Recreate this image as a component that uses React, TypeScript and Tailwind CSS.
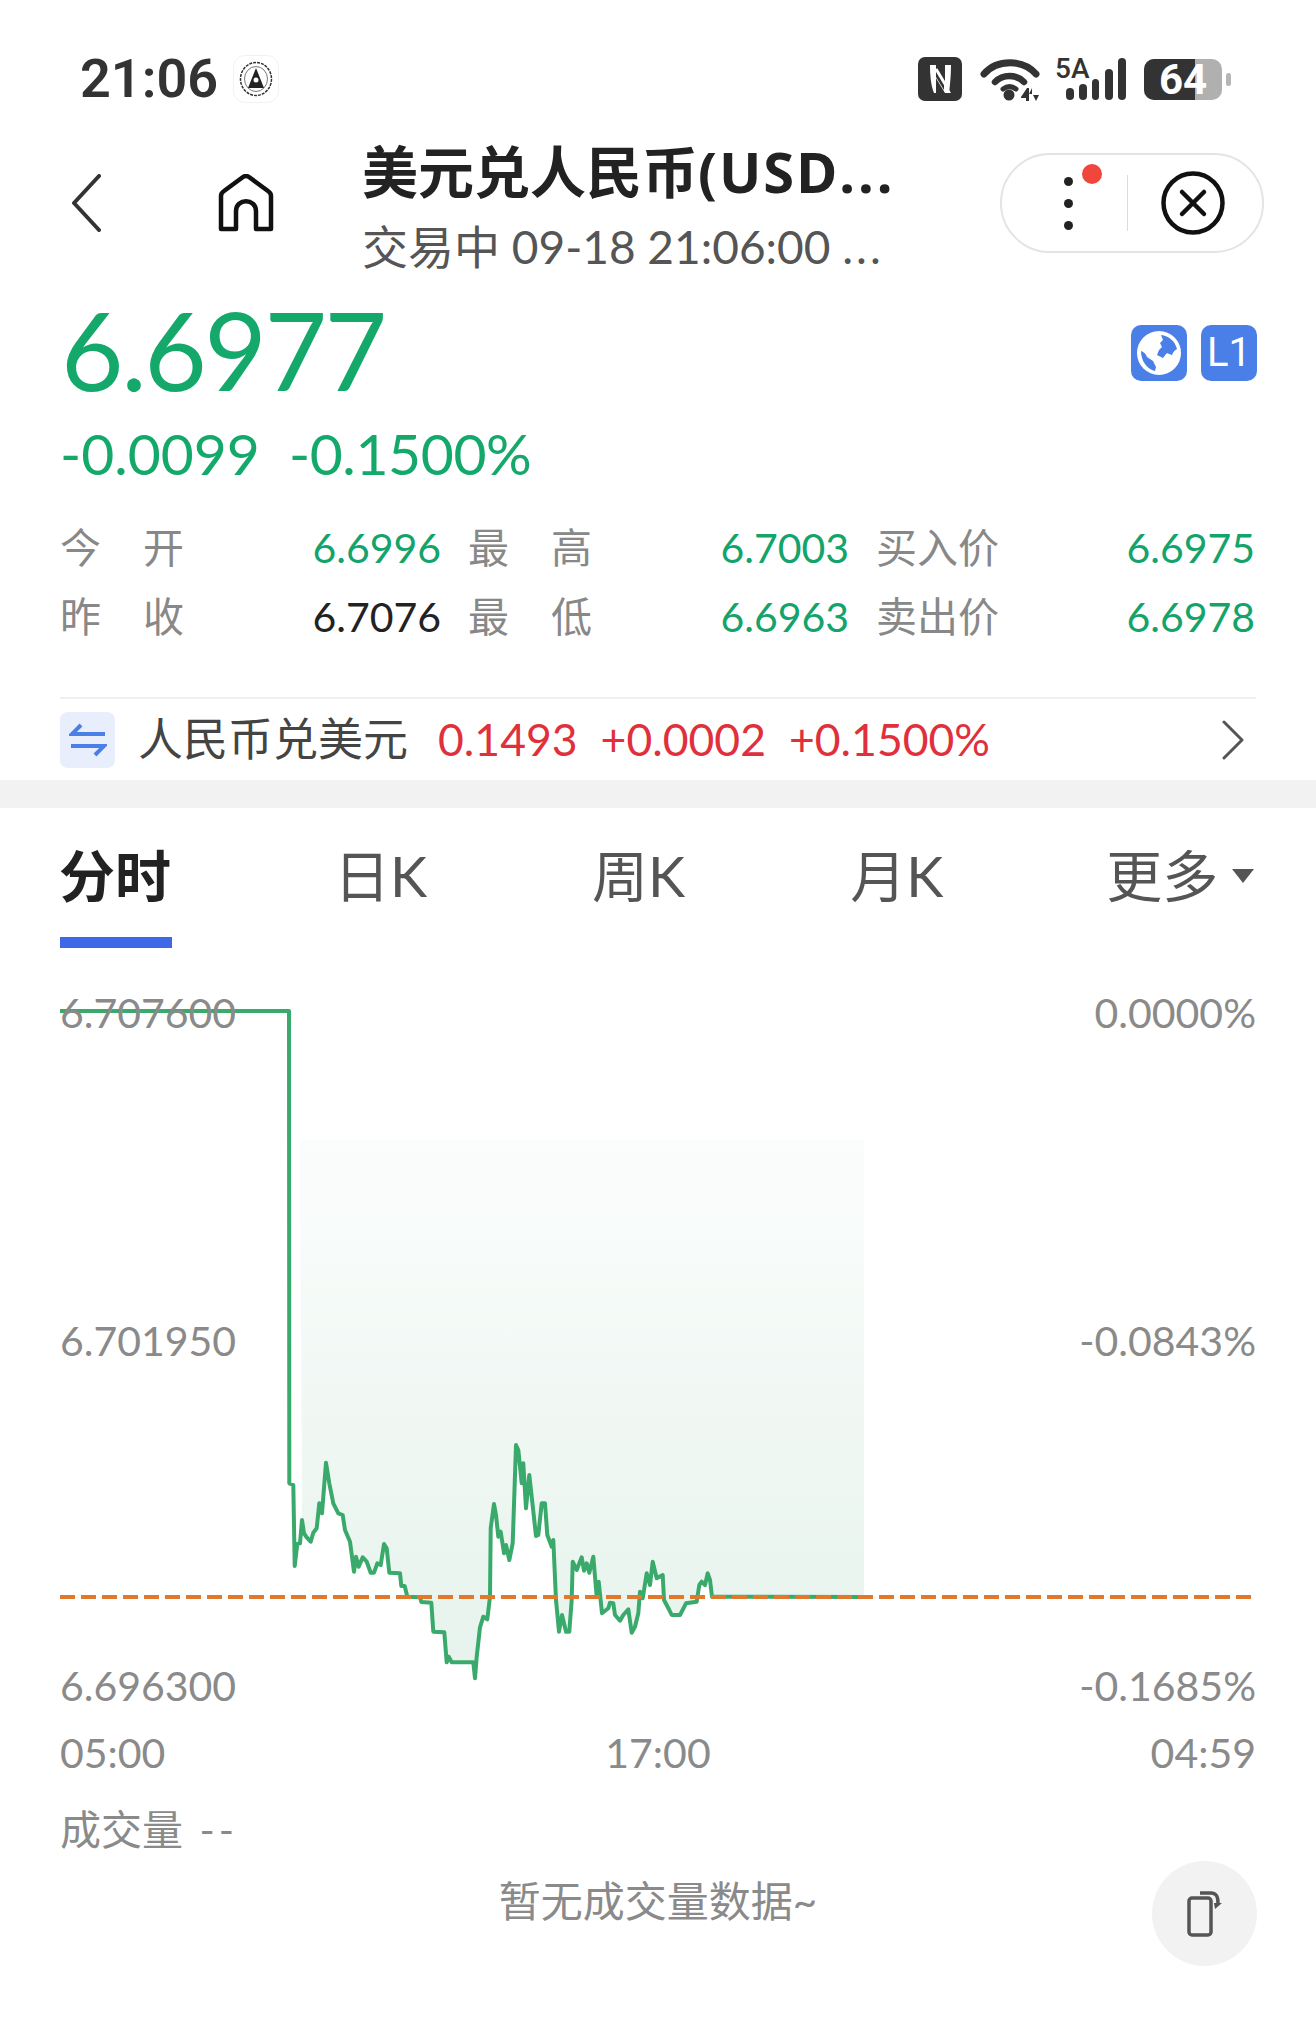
// 美元兑人民币 quote page: status bar, header, quote stats, tabs and intraday chart
const FONT = "font-['Lato','Noto_Sans_CJK_SC',sans-serif]";

// line traced from the reference, coordinates in a 3x crop at (260,1400)
const TRACE = [
  [88, 250], [100, 255], [104, 498], [112, 432], [120, 430], [126, 360], [132, 400], [140, 412], [152, 425], [160, 398],
  [170, 385], [178, 310], [186, 340], [198, 188], [208, 250], [220, 310], [235, 340], [248, 345], [255, 390], [270, 425],
  [282, 515], [288, 470], [296, 500], [308, 472], [320, 485], [332, 518], [342, 518], [352, 490], [362, 495], [372, 432],
  [380, 445], [388, 518], [420, 520], [424, 558], [434, 558], [442, 590], [480, 592], [484, 606], [514, 608], [520, 695],
  [553, 697], [560, 787], [566, 770], [575, 787], [640, 787], [645, 835], [650, 770], [660, 682], [670, 650], [682, 658],
  [690, 590], [692, 385], [702, 312], [708, 345], [715, 410], [722, 395], [732, 460], [738, 435], [748, 480], [758, 430],
  [768, 135], [775, 150], [785, 250], [790, 190], [798, 325], [808, 225], [815, 290], [828, 408], [835, 405], [845, 310],
  [855, 310], [862, 405], [875, 440], [880, 420], [888, 600], [897, 695], [906, 645], [918, 695], [928, 695], [935, 600],
  [938, 485], [950, 510], [965, 472], [972, 512], [980, 490], [988, 518], [1000, 470], [1010, 590], [1016, 545], [1026, 640],
  [1045, 625], [1050, 608], [1060, 610], [1065, 645], [1080, 662], [1090, 645], [1105, 628], [1115, 698], [1125, 680],
  [1135, 640], [1140, 575], [1148, 595], [1160, 520], [1170, 555], [1178, 485], [1190, 535], [1208, 525], [1212, 600],
  [1228, 630], [1235, 645], [1260, 645], [1278, 610], [1310, 605], [1318, 555], [1325, 545], [1335, 555], [1343, 520],
  [1350, 540], [1356, 590],
];

const toPoint = ([x, y]: number[]) => `${(260 + x / 3).toFixed(1)},${(1400 + y / 3).toFixed(1)}`;

const LINE = ['60,1011', '289,1011', ...TRACE.map(toPoint), '864,1597'].join(' ');
// the tint starts a little to the right of the vertical drop
const AREA = ['300,1140', '864,1140', '864,1597', ...TRACE.filter(([x]) => x >= 126).reverse().map(toPoint)].join(' ');

function StatusIcons() {
  return (
    <div className="flex items-center">
      <svg width="44" height="44" viewBox="0 0 44 44">
        <rect width="44" height="44" rx="7" fill="#333" />
        <path d="M12 8h6v28h-2C13 29 12 19 12 8z" fill="#fff" />
        <path d="M16 8l17 28h-6L13 13z" fill="#fff" />
        <path d="M33 8c0 10-1 20-2 28h-4V8z" fill="#fff" />
        <path d="M18 20l8 13V18l-8-8z" fill="#333" />
        <path d="M18 12l9 15" stroke="#fff" strokeWidth="3" />
      </svg>
      <svg className="ml-[18px]" width="60" height="44" viewBox="0 0 60 44">
        <path d="M4 17C17 2 43 2 56 17" fill="none" stroke="#333" strokeWidth="7" strokeLinecap="round" />
        <path d="M15 25c8-8 21-8 29 0" fill="none" stroke="#333" strokeWidth="6.5" strokeLinecap="round" />
        <path d="M23 32c4-3 9-3 13 0" fill="none" stroke="#333" strokeWidth="5" strokeLinecap="round" />
        <circle cx="29" cy="38" r="5.5" fill="#333" />
        <path d="M41 40l6-9h2v13h-3v-3h-5zM52 31v6h-3zM53 38h6l-3 6z" fill="#333" />
      </svg>
      <svg className="ml-[15px] overflow-visible" width="72" height="44" viewBox="0 0 72 44">
        <text x="0" y="21" fontFamily="Roboto, sans-serif" fontSize="28" fontWeight="500" fill="#333">5A</text>
        <rect x="11" y="31" width="8" height="12" rx="4" fill="#333" />
        <rect x="24" y="27" width="8" height="16" rx="4" fill="#333" />
        <rect x="37" y="22" width="7" height="21" rx="3.5" fill="#333" />
        <rect x="50" y="12" width="8" height="31" rx="4" fill="#333" />
        <rect x="63" y="1" width="8" height="42" rx="4" fill="#333" />
      </svg>
      <div className="relative ml-[17px] flex h-[41px] w-[78px] rounded-[10px] bg-[#b0b0b0]">
        <div className="w-[51px] rounded-l-[10px] bg-[#333]" />
        <span className="absolute left-[15px] top-0 font-['Roboto',sans-serif] text-[42px] font-bold leading-[42px] text-white">64</span>
      </div>
      <div className="ml-[4px] h-[13px] w-[5px] rounded-sm bg-[#b5b5b5]" />
    </div>
  );
}

function Stat({ a, b, value, color = 'text-[#13a36b]' }: { a: string; b?: string; value: string; color?: string }) {
  return (
    <div className="flex items-center justify-between">
      <div className="flex w-[124px] justify-between text-[#888]">
        <span>{a}</span>
        {b ? <span>{b}</span> : null}
      </div>
      <span className={`text-[41px] ${color}`}>{value}</span>
    </div>
  );
}

function AxisRow({ left, right, className }: { left: string; right: string; className: string }) {
  return (
    <div className={`flex justify-between text-[#8a8a8a] ${className}`}>
      <span>{left}</span>
      <span>{right}</span>
    </div>
  );
}

export default function App() {
  return (
    <div className={`flex h-[2021px] w-[1316px] flex-col overflow-hidden bg-white ${FONT}`}>
      {/* status bar */}
      <div className="mt-[51px] flex h-[56px] items-center justify-between pl-[80px] pr-[85px]">
        <div className="flex items-center">
          <span className="font-['Roboto',sans-serif] text-[54px] font-semibold leading-none text-[#333]">21:06</span>
          <div className="ml-[15px] flex h-[48px] w-[46px] items-center justify-center rounded-xl border border-[#f2f2f2]">
            <svg width="34" height="36" viewBox="0 0 34 36">
              <ellipse cx="17" cy="18" rx="15.5" ry="16.5" fill="none" stroke="#333" strokeWidth="1.5" strokeDasharray="3 1" />
              <ellipse cx="17" cy="18" rx="11.5" ry="12.5" fill="none" stroke="#777" strokeWidth="1" />
              <path d="M17 7l8 20H9z" fill="#222" />
              <circle cx="17" cy="19" r="2.5" fill="#fff" />
            </svg>
          </div>
        </div>
        <StatusIcons />
      </div>

      {/* nav */}
      <div className="mt-[34px] flex h-[124px] items-center pl-[71px]">
        <svg width="30" height="58" viewBox="0 0 30 58">
          <path d="M28 2L3 29l25 27" fill="none" stroke="#333" strokeWidth="4" strokeLinecap="round" strokeLinejoin="round" />
        </svg>
        <svg className="ml-[117px]" width="56" height="58" viewBox="0 0 56 58">
          <path d="M3 55V22Q3 19 6 17L25 3Q28 1 31 3L50 17Q53 19 53 22V55H38V37c0-13-20-13-20 0v18z" fill="none" stroke="#111" strokeWidth="4.5" strokeLinejoin="round" />
        </svg>
        <div className="ml-[88px] flex w-[560px] flex-col pt-[5px]">
          <span className="font-['Noto_Sans','Noto_Sans_CJK_SC',sans-serif] text-[56px] font-bold leading-[66px] text-[#222]">
            美元兑人民币<span className="tracking-[2px]">(USD</span><span className="tracking-[3px]">...</span>
          </span>
          <span className="mt-[17px] text-[46px] leading-[52px] text-[#555]">
            交易中 09-18 21:06:00 <span className="tracking-[3px]">...</span>
          </span>
        </div>
        <div className="ml-auto mr-[52px] flex h-[100px] w-[264px] items-center rounded-full border-2 border-[#e4e4e4]">
          <div className="relative ml-[62px] flex flex-col gap-[13px]">
            <span className="h-[9px] w-[9px] rounded-full bg-[#222]" />
            <span className="h-[9px] w-[9px] rounded-full bg-[#222]" />
            <span className="h-[9px] w-[9px] rounded-full bg-[#222]" />
            <span className="absolute left-[18px] top-[-13px] h-[20px] w-[20px] rounded-full bg-[#f0463c]" />
          </div>
          <div className="ml-[54px] h-[56px] w-px bg-[#dcdcdc]" />
          <svg className="ml-[33px]" width="64" height="64" viewBox="0 0 64 64">
            <circle cx="32" cy="32" r="29.5" fill="none" stroke="#111" strokeWidth="4.5" />
            <path d="M21 21l22 22M43 21L21 43" fill="none" stroke="#111" strokeWidth="4.5" strokeLinecap="round" />
          </svg>
        </div>
      </div>

      {/* price */}
      <div className="mt-[23px] flex items-start justify-between pl-[61px] pr-[59px]">
        <span className="text-[108px] leading-[122px] tracking-[-2.5px] text-[#14a96b]">6.6977</span>
        <div className="mt-[37px] flex gap-[14px]">
          <svg width="56" height="56" viewBox="0 0 56 56">
            <rect width="56" height="56" rx="10" fill="#4a7fe8" />
            <circle cx="28" cy="28" r="22" fill="#fff" />
            <path d="M30 10c8 1 14 6 16 14-2 1-4 3-5 6-3-1-5-3-6-1l-3 4-6-3 2-5 3-3-2-4 3-3zM10 26c3 1 5 3 6 6l6 4 3 6-1 4c-8-2-14-10-14-20z" fill="#4a7fe8" />
          </svg>
          <div className="flex h-[56px] w-[56px] items-center justify-center rounded-[10px] bg-[#4a7fe8] font-['Roboto',sans-serif] text-[40px] leading-none text-white">L1</div>
        </div>
      </div>

      {/* change */}
      <div className="mt-[10px] flex gap-[29px] pl-[60px] text-[57px] leading-[66px] text-[#14a96b]">
        <span>-0.0099</span>
        <span className="tracking-[-0.4px]">-0.1500%</span>
      </div>

      {/* stats */}
      <div className="mt-[37px] grid grid-cols-[381px_381px_379px] gap-x-[27px] gap-y-[19px] pl-[60px] text-[41px] leading-[50px]">
        <Stat a="今" b="开" value="6.6996" />
        <Stat a="最" b="高" value="6.7003" />
        <Stat a="买入价" value="6.6975" />
        <Stat a="昨" b="收" value="6.7076" color="text-[#222]" />
        <Stat a="最" b="低" value="6.6963" />
        <Stat a="卖出价" value="6.6978" />
      </div>

      {/* reverse pair */}
      <div className="mx-[60px] mt-[55px] flex h-[83px] items-center border-t-2 border-[#f0f0f0] text-[44.5px]">
        <div className="flex h-[56px] w-[55px] items-center justify-center rounded-lg bg-[#e8eefb]">
          <svg width="38" height="40" viewBox="0 0 38 40">
            <path d="M36 14H3l9-9M2 26h33l-9 9" fill="none" stroke="#4a7fe8" strokeWidth="4" />
          </svg>
        </div>
        <span className="ml-[23px] text-[45px] text-[#444]">人民币兑美元</span>
        <div className="ml-[30px] flex gap-[23px] text-[#e0303c]">
          <span>0.1493</span>
          <span>+0.0002</span>
          <span>+0.1500%</span>
        </div>
        <svg className="ml-auto mr-[11px]" width="24" height="40" viewBox="0 0 24 40">
          <path d="M3 2l18 18L3 38" fill="none" stroke="#555" strokeWidth="3" strokeLinecap="round" strokeLinejoin="round" />
        </svg>
      </div>

      <div className="h-[28px] bg-[#f2f2f2]" />

      {/* tabs */}
      <div className="mt-[38px] flex h-[60px] items-center text-[56px] leading-none text-[#555]">
        <span className="ml-[59px] font-bold text-[#222]">分时</span>
        <span className="ml-[163px]">日K</span>
        <span className="ml-[165px]">周K</span>
        <span className="ml-[165px]">月K</span>
        <span className="ml-[163px]">更多</span>
        <span className="ml-[14px] h-0 w-0 border-x-[11px] border-t-[14px] border-x-transparent border-t-[#555]" />
      </div>
      <div className="ml-[60px] mt-[31px] h-[11px] w-[112px] bg-[#3e68e8]" />

      {/* chart */}
      <div className="relative mt-[12px] flex h-[760px] flex-col px-[60px] text-[41px] leading-[50px]">
        <svg className="absolute left-0 top-0" width="1316" height="760" viewBox="0 960 1316 760">
          <defs>
            <linearGradient id="area" x1="0" y1="0" x2="0" y2="1">
              <stop offset="0" stopColor="#fbfdfc" />
              <stop offset="1" stopColor="#e6f3ec" />
            </linearGradient>
          </defs>
          <polygon points={AREA} fill="url(#area)" />
          <polyline points={LINE} fill="none" stroke="#3aaa6c" strokeWidth="4" strokeLinejoin="round" />
          <path d="M60 1597H1252" stroke="#e0792b" strokeWidth="4" strokeDasharray="15 6" />
        </svg>
        <AxisRow className="relative mt-[28px]" left="6.707600" right="0.0000%" />
        <AxisRow className="relative mt-[278px]" left="6.701950" right="-0.0843%" />
        <AxisRow className="relative mt-[295px]" left="6.696300" right="-0.1685%" />
        <div className="relative mt-[17px] grid grid-cols-3 text-[#8a8a8a]">
          <span>05:00</span>
          <span className="text-center">17:00</span>
          <span className="text-right">04:59</span>
        </div>
        <span className="relative mt-[27px] text-[#8a8a8a]">成交量 <span className="ml-[6px] tracking-[4px]">--</span></span>
      </div>

      {/* volume */}
      <div className="relative mt-[156px] flex justify-center text-[42px] leading-[50px] text-[#8a8a8a]">
        <span>暂无成交量数据~</span>
        <div className="absolute right-[59px] top-[-15px] flex h-[105px] w-[105px] items-center justify-center rounded-full bg-[#f2f2f2]">
          <svg width="36" height="48" viewBox="0 0 36 48">
            <rect x="2" y="8" width="22" height="37" rx="3" fill="none" stroke="#555" strokeWidth="3.5" />
            <path d="M13 3h11c5 0 7 3 7 10" fill="none" stroke="#555" strokeWidth="3.5" />
            <path d="M27 13h8l-7 6z" fill="#555" />
          </svg>
        </div>
      </div>
    </div>
  );
}
